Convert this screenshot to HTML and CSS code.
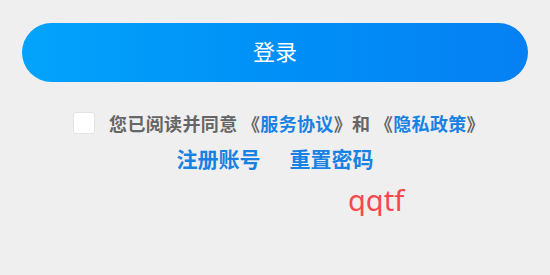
FILE: index.html
```html
<!DOCTYPE html>
<html lang="zh-CN">
<head>
<meta charset="utf-8">
<link rel="stylesheet" href="styles.css">
</head>
<body>
<div class="page">
  <button class="login-btn">登录</button>
  <div class="agree">
    <span class="checkbox"></span>
    <p class="agree-text">您已阅读并同意 《<span class="link">服务协议</span>》和 《<span class="link">隐私政策</span>》</p>
  </div>
  <div class="links">
    <span class="link">注册账号</span>
    <span class="link">重置密码</span>
  </div>
  <div class="mark">qqtf</div>
</div>
</body>
</html>
```
FILE: styles.css
```css
html, body {
  margin: 0;
  padding: 0;
  background: #efefef;
}
body {
  font-family: "Noto Sans CJK SC", "Noto Sans", sans-serif;
}
.page {
  padding: 23px 22px 0;
  display: flex;
  flex-direction: column;
}
.login-btn {
  height: 59px;
  border: none;
  border-radius: 30px;
  background: linear-gradient(90deg, #03a3fb 0%, #0090f7 50%, #0680f3 100%);
  color: #fff;
  font-family: inherit;
  font-size: 22px;
  font-weight: 400;
  padding: 0 0 5px;
}
.agree {
  margin-top: 29px;
  display: flex;
  align-items: center;
  justify-content: center;
  gap: 14px;
  padding-left: 8px;
}
.checkbox {
  width: 20px;
  height: 20px;
  background: #fff;
  border: 1px solid #e2e2e2;
  border-radius: 3px;
}
.agree-text {
  margin: 0;
  font-size: 18px;
  line-height: 24px;
  font-weight: 700;
  letter-spacing: 0.35px;
  color: #666;
}
.link {
  color: #1782e4;
  font-weight: 700;
}
.links {
  margin-top: 11px;
  display: flex;
  justify-content: center;
  gap: 29px;
  font-size: 21px;
  line-height: 24px;
}
.mark {
  margin-top: 14px;
  margin-left: 326px;
  font-family: "Noto Sans", sans-serif;
  font-size: 29px;
  line-height: 32px;
  color: #f4484f;
}
```
